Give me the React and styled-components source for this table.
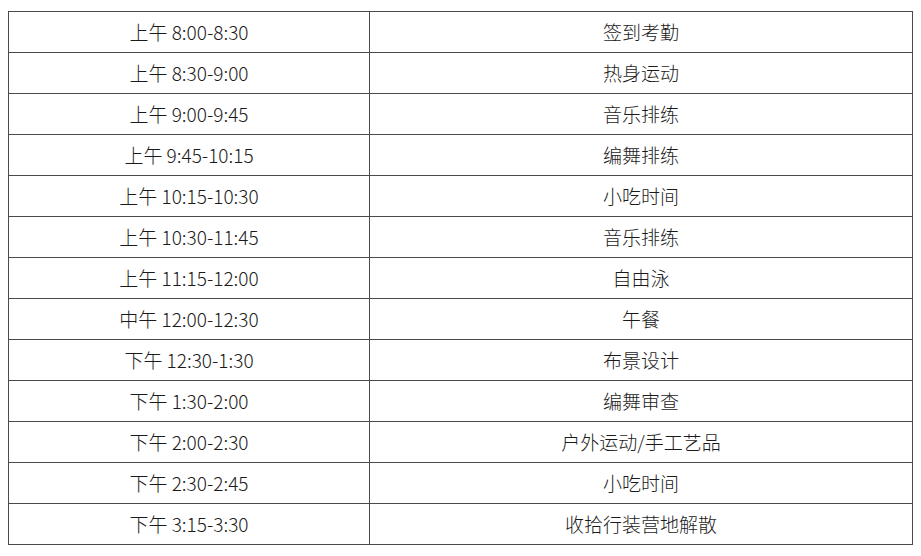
import React from 'react';
import styled, { createGlobalStyle } from 'styled-components';

const GlobalStyle = createGlobalStyle`
  html, body {
    margin: 0;
    padding: 0;
    background: #ffffff;
  }
  body {
    font-family: "Noto Sans CJK SC", "Noto Sans", sans-serif;
    color: #1a1a1a;
  }
`;

const Page = styled.div`
  padding: 11px 0 0 8px;
`;

const Table = styled.table`
  width: 903px;
  border-collapse: collapse;
  table-layout: fixed;
  border: 1px solid #4a4a4a;
`;

const Row = styled.tr`
  height: 41px;
`;

const Cell = styled.td`
  width: ${({ $width }) => $width}px;
  border: 1px solid #4a4a4a;
  padding: 0;
  text-align: center;
  vertical-align: middle;
  font-size: 19px;
  font-weight: 300;
  line-height: 22px;
`;

const schedule = [
  ['上午 8:00-8:30', '签到考勤'],
  ['上午 8:30-9:00', '热身运动'],
  ['上午 9:00-9:45', '音乐排练'],
  ['上午 9:45-10:15', '编舞排练'],
  ['上午 10:15-10:30', '小吃时间'],
  ['上午 10:30-11:45', '音乐排练'],
  ['上午 11:15-12:00', '自由泳'],
  ['中午 12:00-12:30', '午餐'],
  ['下午 12:30-1:30', '布景设计'],
  ['下午 1:30-2:00', '编舞审查'],
  ['下午 2:00-2:30', '户外运动/手工艺品'],
  ['下午 2:30-2:45', '小吃时间'],
  ['下午 3:15-3:30', '收拾行装营地解散'],
];

const App = () => (
  <>
    <GlobalStyle />
    <Page>
      <Table>
        <tbody>
          {schedule.map(([time, activity]) => (
            <Row key={time}>
              <Cell $width={360}>{time}</Cell>
              <Cell $width={542}>{activity}</Cell>
            </Row>
          ))}
        </tbody>
      </Table>
    </Page>
  </>
);

export default App;
